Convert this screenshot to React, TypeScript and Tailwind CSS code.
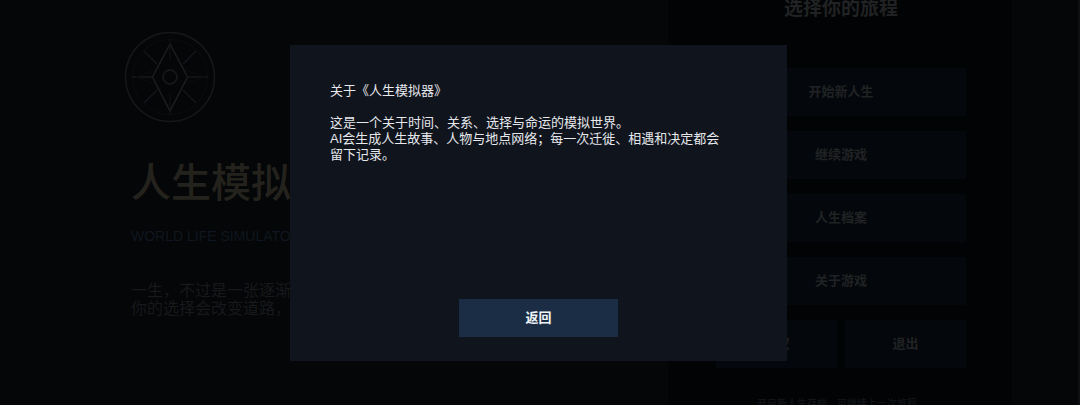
import { useState } from "react";

const menuItems = ["开始新人生", "继续游戏", "人生档案", "关于游戏"];

const menuButton = "h-12 bg-[#04070b] text-[13px] leading-4 font-bold text-[#202223]";

function CompassLogo() {
    return (
        <svg width="92" height="92" viewBox="0 0 92 92" fill="none" stroke="#15171a" aria-hidden="true">
            <circle cx="46" cy="46" r="44.5" strokeWidth="1.5" />
            <circle cx="46" cy="46" r="37.5" stroke="#0a0c0e" />
            <path d="M46 13 L63.5 46 L46 80 L28.5 46 Z" stroke="#1b1d1f" strokeWidth="1.5" />
            <circle cx="46" cy="46" r="7" strokeWidth="1.8" />
            <path d="M8 46 H29 M63 46 H84" strokeWidth="1.5" />
            <path d="M46 8 V29 M46 63 V84" stroke="#101214" />
            <path d="M20 20 L33 33 M72 20 L59 33 M20 72 L33 59 M72 72 L59 59" strokeWidth="1.3" />
            <path d="M12 46 L31 39 M12 46 L31 53 M80 46 L61 39 M80 46 L61 53" stroke="#0a0c0e" />
        </svg>
    );
}

function Intro() {
    return (
        <section className="flex-1 pt-[31px] pl-[131px]">
            <div className="-ml-[7px]">
                <CompassLogo />
            </div>
            <h1 className="mt-9 text-[40px] leading-12 font-medium whitespace-nowrap text-[#24221c]">人生模拟器</h1>
            <p className="mt-[19px] text-sm leading-5 whitespace-nowrap text-[#10161f]">WORLD LIFE SIMULATOR</p>
            <p className="mt-9 text-base leading-[18px] whitespace-nowrap text-[#17191b]">
                一生，不过是一张逐渐展开的地图。
                <br />
                你的选择会改变道路，也会改变世界。
            </p>
        </section>
    );
}

function Menu({ onAbout }: { onAbout: () => void }) {
    return (
        <nav className="mr-[66px] w-[344px] bg-[#020305] pr-[46px] pl-12">
            <h2 className="-mt-[3px] text-center text-[19px] leading-6 font-bold text-[#202223]">选择你的旅程</h2>
            <div className="mt-[47px] grid grid-cols-2 gap-x-2 gap-y-[15px]">
                {menuItems.map((item) => (
                    <button
                        key={item}
                        type="button"
                        className={`${menuButton} col-span-2`}
                        onClick={item === "关于游戏" ? onAbout : undefined}
                    >
                        {item}
                    </button>
                ))}
                <button type="button" className={menuButton}>版权</button>
                <button type="button" className={menuButton}>退出</button>
            </div>
            <p className="mt-7 pr-2 text-center text-[10px] leading-4 whitespace-nowrap text-[#14171c]">
                开启新人生存档，可继续上一次旅程
            </p>
        </nav>
    );
}

function AboutDialog({ onClose }: { onClose: () => void }) {
    return (
        <div className="absolute inset-0 flex items-center justify-center pt-px pr-px">
            <div
                role="dialog"
                aria-modal="true"
                aria-label="关于《人生模拟器》"
                className="flex h-[78%] w-[46%] min-w-[497px] flex-col items-center justify-between bg-[#10141d] px-10 pt-[38px] pb-6"
            >
                <div className="w-full text-[13px] leading-4 whitespace-nowrap text-[#e6e8ec]">
                    <p>关于《人生模拟器》</p>
                    <p className="mt-4">
                        这是一个关于时间、关系、选择与命运的模拟世界。
                        <br />
                        AI会生成人生故事、人物与地点网络；每一次迁徙、相遇和决定都会
                        <br />
                        留下记录。
                    </p>
                </div>
                <button
                    type="button"
                    className="h-[38px] w-[159px] bg-[#1b2d44] text-[13px] leading-4 font-bold text-[#f0f4f8]"
                    onClick={onClose}
                >
                    返回
                </button>
            </div>
        </div>
    );
}

export default function App() {
    const [aboutOpen, setAboutOpen] = useState(true);

    return (
        <div className="relative flex h-screen overflow-hidden border-r-2 border-[#0f1013] bg-[#040608] font-['Liberation_Sans','Noto_Sans_CJK_SC',sans-serif]">
            <Intro />
            <Menu onAbout={() => setAboutOpen(true)} />
            {aboutOpen && <AboutDialog onClose={() => setAboutOpen(false)} />}
        </div>
    );
}
